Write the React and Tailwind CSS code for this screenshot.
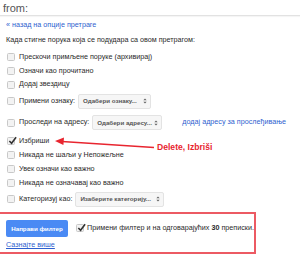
import React from 'react';

const font = { fontFamily: '"Liberation Sans", Arial, sans-serif' };

function Box({ checked }) {
  return (
    <span className="relative inline-block w-[8px] h-[8px] shrink-0 rounded-[1.5px] border border-[#c8c8c8] bg-[#f3f3f3]">
      {checked && (
        <svg viewBox="0 0 10 10" className="absolute -top-[2px] left-0 w-[9px] h-[9px]">
          <path d="M1.5 5.5 L4 8 L9 1.5" fill="none" stroke="#333" strokeWidth="1.8" />
        </svg>
      )}
    </span>
  );
}

function Select({ label, w }) {
  return (
    <span className={`inline-flex items-center justify-between h-[15px] ${w} ml-[3px] pl-[4px] pr-[3px] rounded-[2px] border border-[#e3e3e3] bg-[#f6f6f6] text-[6.2px] font-bold text-[#555]`}>
      {label}
      <svg viewBox="0 0 6 9" className="w-[4px] h-[6px]">
        <path d="M0.5 3.5 L3 0.8 L5.5 3.5 Z M0.5 5.5 L3 8.2 L5.5 5.5 Z" fill="#666" />
      </svg>
    </span>
  );
}

function Row({ h, checked, children }) {
  return (
    <div className={`flex items-center gap-[4px] pl-[7px] whitespace-nowrap ${h}`}>
      <Box checked={checked} />
      {children}
    </div>
  );
}

export default function App() {
  return (
    <div className="relative w-[300px] h-[254px] overflow-hidden bg-white text-[7.2px] text-[#2a2a2a]" style={font}>
      {/* search field */}
      <div className="h-[16px] pl-[3px] border-b border-[#e2e2e2] text-[11px] leading-[16px] text-[#555] shadow-[0_1px_1px_rgba(0,0,0,0.04)]">
        from:
      </div>

      <div className="h-[19px] flex items-center pl-[6px] text-[#2e5fcf]">« назад на опције претраге</div>
      <div className="h-[10px] flex items-center pl-[6px]">Када стигне порука која се подудара са овом претрагом:</div>

      <div className="mt-[5px]">
        <Row h="h-[14px]">Прескочи примљене поруке (архивирај)</Row>
        <Row h="h-[14px]">Означи као прочитано</Row>
        <Row h="h-[13px]">Додај звездицу</Row>
        <Row h="h-[20px]">
          <span className="flex items-center">
            Примени ознаку:
            <Select label="Одабери ознаку..." w="w-[73px]" />
          </span>
        </Row>
        <Row h="h-[23px]">
          <span className="flex items-center">
            Проследи на адресу:
            <Select label="Одабери адресу..." w="w-[70px]" />
            <span className="ml-[20px] text-[#2e5fcf]">додај адресу за прослеђивање</span>
          </span>
        </Row>
        <Row h="h-[14px]" checked>Избриши</Row>
        <Row h="h-[14px]">Никада не шаљи у Непожељне</Row>
        <Row h="h-[14px]">Увек означи као важно</Row>
        <Row h="h-[14px]">Никада не означавај као важно</Row>
        <Row h="h-[18px]">
          <span className="flex items-center">
            Категоризуј као:
            <Select label="Изаберите категорију..." w="w-[89px]" />
          </span>
        </Row>
      </div>

      {/* highlighted box */}
      <div className="mt-[4px] w-[256px] h-[42px] border-2 border-l-0 border-[#ec5a63] pl-[6px] pt-[6px]">
        <div className="flex items-center whitespace-nowrap">
          <span className="flex items-center justify-center w-[65px] h-[17px] rounded-[2px] bg-[#4a8af4] text-white text-[6.2px] font-bold">
            Направи филтер
          </span>
          <span className="flex items-center gap-[3px] ml-[8px]">
            <Box checked />
            <span>
              Примени филтер и на одговарајућих <b>30</b> преписки.
            </span>
          </span>
        </div>
        <div className="mt-[3px] text-[#2e5fcf] underline leading-[9px]">Сазнајте више</div>
      </div>

      {/* annotation */}
      <svg className="absolute left-0 top-0 w-[300px] h-[254px] pointer-events-none" viewBox="0 0 300 254">
        <line x1="154" y1="147.5" x2="62" y2="141.5" stroke="#e8252f" strokeWidth="1.4" />
        <path d="M55 141 L64 137.6 L63.4 145 Z" fill="#e8252f" />
      </svg>
      <span className="absolute left-[157px] top-[141px] text-[8.6px] leading-[12px] font-bold text-[#e8252f]">
        Delete, Izbriši
      </span>
    </div>
  );
}
